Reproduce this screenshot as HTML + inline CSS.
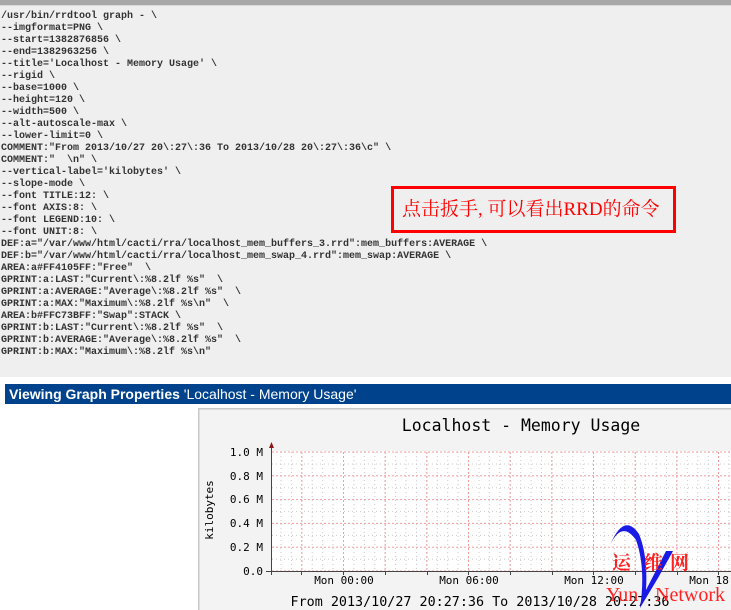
<!DOCTYPE html>
<html><head><meta charset="utf-8"><style>
html,body{margin:0;padding:0;width:731px;height:610px;overflow:hidden;background:#fff;position:relative}
.top{position:absolute;left:0;top:0;width:731px;height:5px;background:#a8a8a8;border-bottom:1px solid #d8d8d8}
.code{position:absolute;left:0;top:6px;width:731px;height:371px;background:#efefef}
pre{position:absolute;left:1px;top:5px;margin:0;font:bold 10px/12px "Liberation Mono",monospace;color:#333}
.red{position:absolute;left:391px;top:180px;width:271px;height:41px;border:3px solid #f00;color:#f00;font:19px/41px "Liberation Serif","Noto Serif CJK SC",serif;padding-left:8px;white-space:nowrap}
.bar{position:absolute;left:5px;top:384px;width:722px;height:20px;background:#00438c;color:#fff;font:14px/20px "Liberation Sans",sans-serif;padding-left:4px;white-space:nowrap}
.g{position:absolute;left:198px;top:408px}
</style></head><body>
<div class="top"></div>
<div class="code"><pre>/usr/bin/rrdtool graph - \
--imgformat=PNG \
--start=1382876856 \
--end=1382963256 \
--title='Localhost - Memory Usage' \
--rigid \
--base=1000 \
--height=120 \
--width=500 \
--alt-autoscale-max \
--lower-limit=0 \
COMMENT:"From 2013/10/27 20\:27\:36 To 2013/10/28 20\:27\:36\c" \
COMMENT:"  \n" \
--vertical-label='kilobytes' \
--slope-mode \
--font TITLE:12: \
--font AXIS:8: \
--font LEGEND:10: \
--font UNIT:8: \
DEF:a="/var/www/html/cacti/rra/localhost_mem_buffers_3.rrd":mem_buffers:AVERAGE \
DEF:b="/var/www/html/cacti/rra/localhost_mem_swap_4.rrd":mem_swap:AVERAGE \
AREA:a#FF4105FF:"Free"  \
GPRINT:a:LAST:"Current\:%8.2lf %s"  \
GPRINT:a:AVERAGE:"Average\:%8.2lf %s"  \
GPRINT:a:MAX:"Maximum\:%8.2lf %s\n"  \
AREA:b#FFC73BFF:"Swap":STACK \
GPRINT:b:LAST:"Current\:%8.2lf %s"  \
GPRINT:b:AVERAGE:"Average\:%8.2lf %s"  \
GPRINT:b:MAX:"Maximum\:%8.2lf %s\n"</pre>
<div class="red">点击扳手, 可以看出RRD的命令</div>
</div>
<div class="bar"><b>Viewing Graph Properties</b> 'Localhost - Memory Usage'</div>
<svg class="g" width="533" height="202" viewBox="198 408 533 202" xmlns="http://www.w3.org/2000/svg">
<defs>
<pattern id="vmin" patternUnits="userSpaceOnUse" x="343" y="0" width="10.42" height="4"><rect x="0" y="0" width="1" height="1" fill="#c8c8c8"/></pattern>
<pattern id="vmaj" patternUnits="userSpaceOnUse" x="343" y="0" width="41.67" height="4"><rect x="0" y="0" width="1" height="2" fill="#f29b9b"/></pattern>
<pattern id="hmin" patternUnits="userSpaceOnUse" x="0" y="463.5" width="4" height="23.8"><rect x="0" y="0" width="1" height="1" fill="#c8c8c8"/></pattern>
<pattern id="hmaj" patternUnits="userSpaceOnUse" x="0" y="451.5" width="4" height="23.8"><rect x="0" y="0" width="2" height="1" fill="#f29b9b"/></pattern>
</defs>
<rect x="198.5" y="408.5" width="540" height="210" fill="#f3f3f3" stroke="#c8c8c8" stroke-width="2"/>
<rect x="271" y="451" width="460" height="120" fill="#fff"/>
<rect x="271" y="451" width="460" height="120" fill="url(#vmin)"/>
<rect x="271" y="451" width="460" height="120" fill="url(#hmin)"/>
<rect x="271" y="451" width="460" height="120" fill="url(#vmaj)"/>
<rect x="271" y="451" width="460" height="120" fill="url(#hmaj)"/>
<line x1="271.5" y1="444" x2="271.5" y2="575" stroke="#444"/>
<line x1="266" y1="571.5" x2="731" y2="571.5" stroke="#444"/>
<path d="M269 448 L271.5 442 L274 448 Z" fill="#8b1a1a"/>
<g stroke="#444"><line x1="301.5" y1="571" x2="301.5" y2="575"/><line x1="343.5" y1="571" x2="343.5" y2="575"/><line x1="385.5" y1="571" x2="385.5" y2="575"/><line x1="427.5" y1="571" x2="427.5" y2="575"/><line x1="468.5" y1="571" x2="468.5" y2="575"/><line x1="510.5" y1="571" x2="510.5" y2="575"/><line x1="552.5" y1="571" x2="552.5" y2="575"/><line x1="593.5" y1="571" x2="593.5" y2="575"/><line x1="635.5" y1="571" x2="635.5" y2="575"/><line x1="677.5" y1="571" x2="677.5" y2="575"/><line x1="718.5" y1="571" x2="718.5" y2="575"/></g>
<text x="521" y="431" text-anchor="middle" font-family="DejaVu Sans Mono" font-size="16.5" fill="#000">Localhost - Memory Usage</text>
<g font-family="DejaVu Sans Mono" font-size="11" fill="#000" text-anchor="end">
<text x="263" y="456">1.0 M</text><text x="263" y="480">0.8 M</text><text x="263" y="503">0.6 M</text><text x="263" y="527">0.4 M</text><text x="263" y="551">0.2 M</text><text x="263" y="575">0.0</text></g>
<text transform="translate(213,510) rotate(-90)" text-anchor="middle" font-family="DejaVu Sans Mono" font-size="11">kilobytes</text>
<g font-family="DejaVu Sans Mono" font-size="11" text-anchor="middle">
<text x="344" y="584">Mon 00:00</text><text x="469" y="584">Mon 06:00</text><text x="594" y="584">Mon 12:00</text><text x="719" y="584">Mon 18:00</text></g>
<text x="480" y="606" text-anchor="middle" font-family="DejaVu Sans Mono" font-size="13.4">From 2013/10/27 20:27:36 To 2013/10/28 20:27:36</text>
<path d="M610 545 Q622 520 636 540 Q646 568 640 608 L658 578 L673 551 L666 551 L646 590 Q648 556 639 534 Q624 512 610 545 Z" fill="#1a1ae6"/>
<text x="612" y="569" font-family="Noto Serif CJK SC,serif" font-size="19" font-weight="bold" fill="#f22">运</text>
<text x="644" y="569" font-family="Noto Serif CJK SC,serif" font-size="19" font-weight="bold" fill="#f22">维</text>
<text x="670" y="569" font-family="Noto Serif CJK SC,serif" font-size="19" font-weight="bold" fill="#f22">网</text>
<text x="606" y="601" font-family="Liberation Serif" font-size="20" fill="#f22">Yun</text>
<text x="655" y="601" font-family="Liberation Serif" font-size="20" fill="#f22">Network</text>
</svg>
</body></html>
